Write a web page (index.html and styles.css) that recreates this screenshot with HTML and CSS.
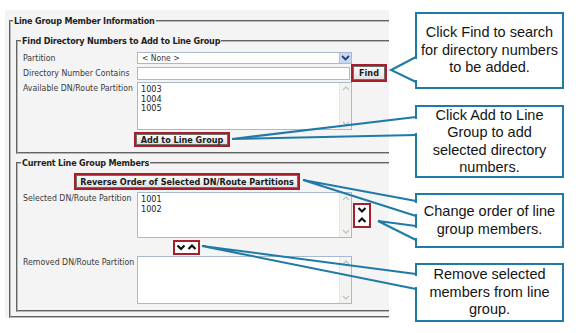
FILE: index.html
```html
<!DOCTYPE html>
<html lang="en">
<head>
    <meta charset="UTF-8">
    <meta name="viewport" content="width=device-width, initial-scale=1.0">
    <title>Line Group Member Information</title>
    <link rel="stylesheet" href="styles.css">
</head>
<body>
<div class="page">
    <div class="screen">
        <fieldset class="group">
            <legend>Line Group Member Information</legend>

            <fieldset class="sub sub-find">
                <legend>Find Directory Numbers to Add to Line Group</legend>
                <div class="row row-select">
                    <span class="label">Partition</span>
                    <div class="select">
                        <span>&lt; None &gt;</span>
                        <span class="select-arrow">
                            <svg width="9" height="6" viewBox="0 0 9 6"><polyline points="1,1 4.5,4.5 8,1" fill="none" stroke="#24407a" stroke-width="1.8"/></svg>
                        </span>
                    </div>
                </div>
                <div class="row row-input">
                    <span class="label">Directory Number Contains</span>
                    <div class="input"></div>
                    <span class="mark mark-find"><button class="btn">Find</button></span>
                </div>
                <div class="row row-list">
                    <span class="label">Available DN/Route Partition</span>
                    <div class="listbox">
                        <div class="items">1003<br>1004<br>1005</div>
                        <div class="scrollbar">
                            <svg width="8" height="5" viewBox="0 0 8 5"><polyline points="1,4 4,1 7,4" fill="none" stroke="#c4c4c4" stroke-width="1.4"/></svg>
                            <svg width="8" height="5" viewBox="0 0 8 5"><polyline points="1,1 4,4 7,1" fill="none" stroke="#c4c4c4" stroke-width="1.4"/></svg>
                        </div>
                    </div>
                </div>
                <div class="row row-action">
                    <span class="mark mark-add"><button class="btn">Add to Line Group</button></span>
                </div>
            </fieldset>

            <fieldset class="sub sub-members">
                <legend>Current Line Group Members</legend>
                <div class="row row-reverse">
                    <span class="mark mark-reverse"><button class="btn">Reverse Order of Selected DN/Route Partitions</button></span>
                </div>
                <div class="row row-list row-selected">
                    <span class="label">Selected DN/Route Partition</span>
                    <div class="listbox listbox-short">
                        <div class="items">1001<br>1002</div>
                        <div class="scrollbar">
                            <svg width="8" height="5" viewBox="0 0 8 5"><polyline points="1,4 4,1 7,4" fill="none" stroke="#c4c4c4" stroke-width="1.4"/></svg>
                            <svg width="8" height="5" viewBox="0 0 8 5"><polyline points="1,1 4,4 7,1" fill="none" stroke="#c4c4c4" stroke-width="1.4"/></svg>
                        </div>
                    </div>
                    <span class="mark mark-order">
                        <svg width="14" height="21" viewBox="0 0 14 21">
                            <polyline points="3.5,3 7,6.5 10.5,3" fill="none" stroke="#111" stroke-width="2.2"/>
                            <polyline points="3.5,17 7,13.5 10.5,17" fill="none" stroke="#111" stroke-width="2.2"/>
                        </svg>
                    </span>
                </div>
                <div class="row row-move">
                    <span class="mark mark-move">
                        <svg width="23" height="11" viewBox="0 0 23 11">
                            <polyline points="2.5,3.5 6,7 9.5,3.5" fill="none" stroke="#111" stroke-width="2.2"/>
                            <polyline points="13.5,7 17,3.5 20.5,7" fill="none" stroke="#111" stroke-width="2.2"/>
                        </svg>
                    </span>
                </div>
                <div class="row row-list row-removed">
                    <span class="label">Removed DN/Route Partition</span>
                    <div class="listbox">
                        <div class="items"></div>
                        <div class="scrollbar">
                            <svg width="8" height="5" viewBox="0 0 8 5"><polyline points="1,4 4,1 7,4" fill="none" stroke="#c4c4c4" stroke-width="1.4"/></svg>
                            <svg width="8" height="5" viewBox="0 0 8 5"><polyline points="1,1 4,4 7,1" fill="none" stroke="#c4c4c4" stroke-width="1.4"/></svg>
                        </div>
                    </div>
                </div>
            </fieldset>
        </fieldset>
    </div>

    <div class="notes">
        <div class="note note-find">Click Find to search<br>for directory numbers<br>to be added.</div>
        <div class="note note-add">Click Add to Line<br>Group to add<br>selected directory<br>numbers.</div>
        <div class="note note-order">Change order of line<br>group members.</div>
        <div class="note note-remove">Remove selected<br>members from line<br>group.</div>
    </div>

    <!-- callout pointers drawn over the form -->
    <svg class="pointers" width="576" height="333" viewBox="0 0 576 333">
        <g fill="none" stroke="#1f7aa6" stroke-width="2">
            <polyline points="416,57 391,70 416,82"/>
            <polyline points="416,117 232,139 416,135"/>
            <polyline points="416,201 303,180 416,216"/>
            <polyline points="416,226 378,221 416,240"/>
            <polyline points="416,274 202,246 416,289"/>
        </g>
        <g fill="#fff">
            <rect x="415" y="59" width="3" height="21"/>
            <rect x="415" y="119" width="3" height="14"/>
            <rect x="415" y="203" width="3" height="11"/>
            <rect x="415" y="228" width="3" height="10"/>
            <rect x="415" y="276" width="3" height="11"/>
        </g>
    </svg>
</div>
</body>
</html>
```

FILE: styles.css
```css
body {
    margin: 0;
    background-color: #fff;
    font-family: "DejaVu Sans Condensed", "DejaVu Sans", sans-serif;
    font-stretch: condensed;
    color: #333;
}
.page {
    position: relative;
    display: flex;
    align-items: flex-start;
    width: 576px;
    height: 333px;
    overflow: hidden;
}
.screen {
    margin: 10px 0 0 5px;
    width: 384px;
    height: 308px;
    padding: 5px 0 0 4px;
    box-sizing: border-box;
    background-color: #f4f4f4;
    overflow: hidden;
}
fieldset {
    margin: 0;
    min-width: 0;
    border: 2px groove #b8b8b8;
    border-right: 0;
}
legend {
    font-size: 9px;
    font-weight: bold;
    letter-spacing: -0.2px;
    line-height: 12px;
    color: #1e1e1e;
    padding: 0 1px;
    white-space: nowrap;
}
.group {
    padding: 0 0 4px 5px;
}
.group > legend {
    margin-left: -3px;
}
.sub {
    padding: 0 0 0 5px;
}
.sub > legend {
    margin-left: -2px;
}
.sub-find {
    margin-top: 8px;
    padding-bottom: 5px;
}
.sub-members {
    margin-top: 3px;
    padding-bottom: 6px;
}
.row {
    display: flex;
    align-items: flex-start;
}
.label {
    width: 114px;
    flex-shrink: 0;
    font-size: 8.7px;
    line-height: 12px;
    color: #3a3a3a;
    white-space: nowrap;
}
.row-select {
    margin-top: 5px;
}
.select {
    display: flex;
    justify-content: space-between;
    align-items: center;
    width: 215px;
    height: 12px;
    box-sizing: border-box;
    border: 1px solid #a9b9cc;
    background-color: #fff;
    font-size: 8.5px;
    color: #333;
    padding-left: 4px;
}
.select-arrow {
    display: flex;
    align-items: center;
    justify-content: center;
    width: 11px;
    height: 10px;
    background-color: #c9d8ef;
    border-left: 1px solid #b0c2dc;
}
.row-input {
    height: 18px;
    align-items: center;
}
.input {
    width: 213px;
    height: 13px;
    box-sizing: border-box;
    border: 1px solid #a9b9cc;
    background-color: #fff;
}
.listbox {
    display: flex;
    width: 215px;
    height: 48px;
    box-sizing: border-box;
    border: 1px solid #a9b9cc;
    background-color: #fff;
}
.listbox-short {
    height: 46px;
}
.items {
    flex: 1;
    padding: 2px 0 0 3px;
    font-size: 9px;
    line-height: 9.5px;
    color: #222;
}
.scrollbar {
    display: flex;
    flex-direction: column;
    justify-content: space-between;
    align-items: center;
    width: 11px;
    padding: 3px 0;
    background-color: #f3f3f1;
    border-left: 1px solid #e6e6e6;
}
.mark {
    display: inline-flex;
    align-items: center;
    justify-content: center;
    box-sizing: border-box;
    border: 2px solid #a61f2b;
    background-color: #fff;
}
.btn {
    width: 100%;
    height: 100%;
    margin: 0;
    padding: 0 3px;
    font-family: inherit;
    font-stretch: condensed;
    font-size: 9px;
    font-weight: bold;
    color: #1a1a1a;
    background: linear-gradient(#fbfbfb, #e3e3e3);
    border: 1px solid #6e6e6e;
    border-radius: 0;
    cursor: pointer;
}
.mark-find {
    width: 36px;
    height: 18px;
    margin-left: 1px;
}
.row-action {
    margin-top: 2px;
    padding-left: 111px;
}
.mark-add {
    width: 96px;
    height: 15px;
}
.row-reverse {
    margin-top: 4px;
    padding-left: 51px;
}
.mark-reverse {
    width: 226px;
    height: 17px;
}
.row-selected {
    margin-top: 2px;
}
.mark-order {
    width: 18px;
    height: 25px;
    margin: 11px 0 0 1px;
}
.row-move {
    margin-top: 2px;
    padding-left: 150px;
}
.mark-move {
    width: 27px;
    height: 15px;
}
.row-removed {
    margin-top: 1px;
}
.notes {
    display: flex;
    flex-direction: column;
    margin: 12px 0 0 26px;
    width: 149px;
}
.note {
    display: flex;
    align-items: center;
    justify-content: center;
    box-sizing: border-box;
    border: 2px solid #1f7aa6;
    background-color: #fff;
    font-family: "Liberation Sans", Arial, sans-serif;
    font-stretch: normal;
    font-size: 14.5px;
    line-height: 17.5px;
    color: #151515;
    text-align: center;
}
.note-find {
    height: 77px;
}
.note-add {
    height: 73px;
    margin-top: 16px;
}
.note-order {
    height: 55px;
    margin-top: 15px;
}
.note-remove {
    height: 59px;
    margin-top: 15px;
}
.pointers {
    position: absolute;
    top: 0;
    left: 0;
    pointer-events: none;
}
```
